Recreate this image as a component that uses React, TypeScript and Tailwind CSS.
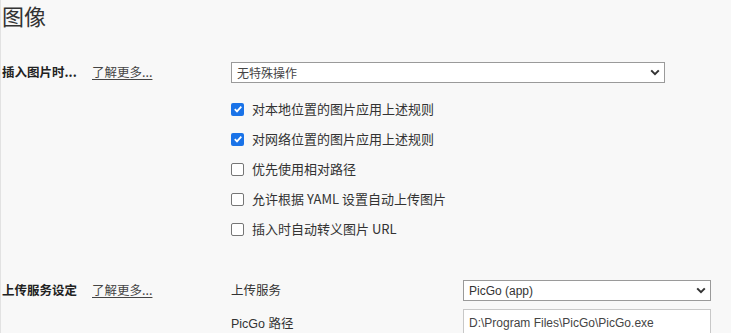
import React from "react";

const font = { fontFamily: '"Noto Sans CJK SC", "Noto Sans", sans-serif' };

function Chevron() {
  return (
    <svg width="10" height="7" viewBox="0 0 10 7" className="shrink-0">
      <path d="M1.2 1.4 L5 5.2 L8.8 1.4" fill="none" stroke="#333" strokeWidth="2" />
    </svg>
  );
}

function Check({ checked, label }: { checked?: boolean; label: string }) {
  return (
    <div className="flex items-center h-[30px]">
      {checked ? (
        <span className="w-[13px] h-[13px] rounded-[2px] bg-[#1a73e8] flex items-center justify-center">
          <svg width="10" height="10" viewBox="0 0 10 10">
            <path d="M1.8 5.2 L4 7.4 L8.3 2.6" fill="none" stroke="#fff" strokeWidth="1.8" />
          </svg>
        </span>
      ) : (
        <span className="w-[13px] h-[13px] rounded-[2px] border border-[#767676] bg-white box-border" />
      )}
      <span className="ml-[8px] text-[13px] text-[#333]">{label}</span>
    </div>
  );
}

function LabelCol({ text }: { text: string }) {
  return (
    <div className="w-[229px] shrink-0 flex items-center h-[21px]">
      <span className="font-bold text-[12.5px] text-[#222] w-[90px]">{text}</span>
      <span className="text-[12.5px] text-[#444] underline underline-offset-2">了解更多...</span>
    </div>
  );
}

export default function App() {
  return (
    <div className="w-[731px] h-[333px] overflow-hidden bg-[#f8f8f8] border-l border-[#e2e2e2] pl-[1px] text-[#333]" style={font}>
      <div className="text-[22px] leading-[31px] text-[#333]">图像</div>
      <div className="flex mt-[31px]">
        <LabelCol text="插入图片时..." />
        <div className="flex flex-col">
          <div className="w-[434px] h-[21px] border border-[#9a9a9a] bg-white flex items-center justify-between pl-[5px] pr-[4px] text-[12px] text-[#444]">
            <span>无特殊操作</span>
            <Chevron />
          </div>
          <div className="mt-[11px] flex flex-col">
            <Check checked label="对本地位置的图片应用上述规则" />
            <Check checked label="对网络位置的图片应用上述规则" />
            <Check label="优先使用相对路径" />
            <Check label="允许根据 YAML 设置自动上传图片" />
            <Check label="插入时自动转义图片 URL" />
          </div>
        </div>
      </div>
      <div className="flex mt-[36px]">
        <LabelCol text="上传服务设定" />
        <div className="flex flex-col">
          <div className="flex items-center">
            <span className="w-[232px] text-[12.5px] text-[#333]">上传服务</span>
            <div className="w-[248px] h-[21px] border border-[#9a9a9a] bg-white flex items-center justify-between pl-[5px] pr-[4px] text-[12px] text-[#333]" style={{ fontFamily: '"Liberation Sans", Arial, sans-serif' }}>
              <span>PicGo (app)</span>
              <Chevron />
            </div>
          </div>
          <div className="flex items-start mt-[8px]">
            <span className="w-[232px] text-[12.5px] text-[#333] mt-[5px]">
              <span style={{ fontFamily: '"Liberation Sans", Arial, sans-serif' }}>PicGo </span>路径
            </span>
            <div className="w-[248px] h-[30px] border border-[#c8c8c8] bg-white pl-[5px] pt-[4px] text-[12px] text-[#444]" style={{ fontFamily: '"Liberation Sans", Arial, sans-serif' }}>
              D:\Program Files\PicGo\PicGo.exe
            </div>
          </div>
        </div>
      </div>
    </div>
  );
}
